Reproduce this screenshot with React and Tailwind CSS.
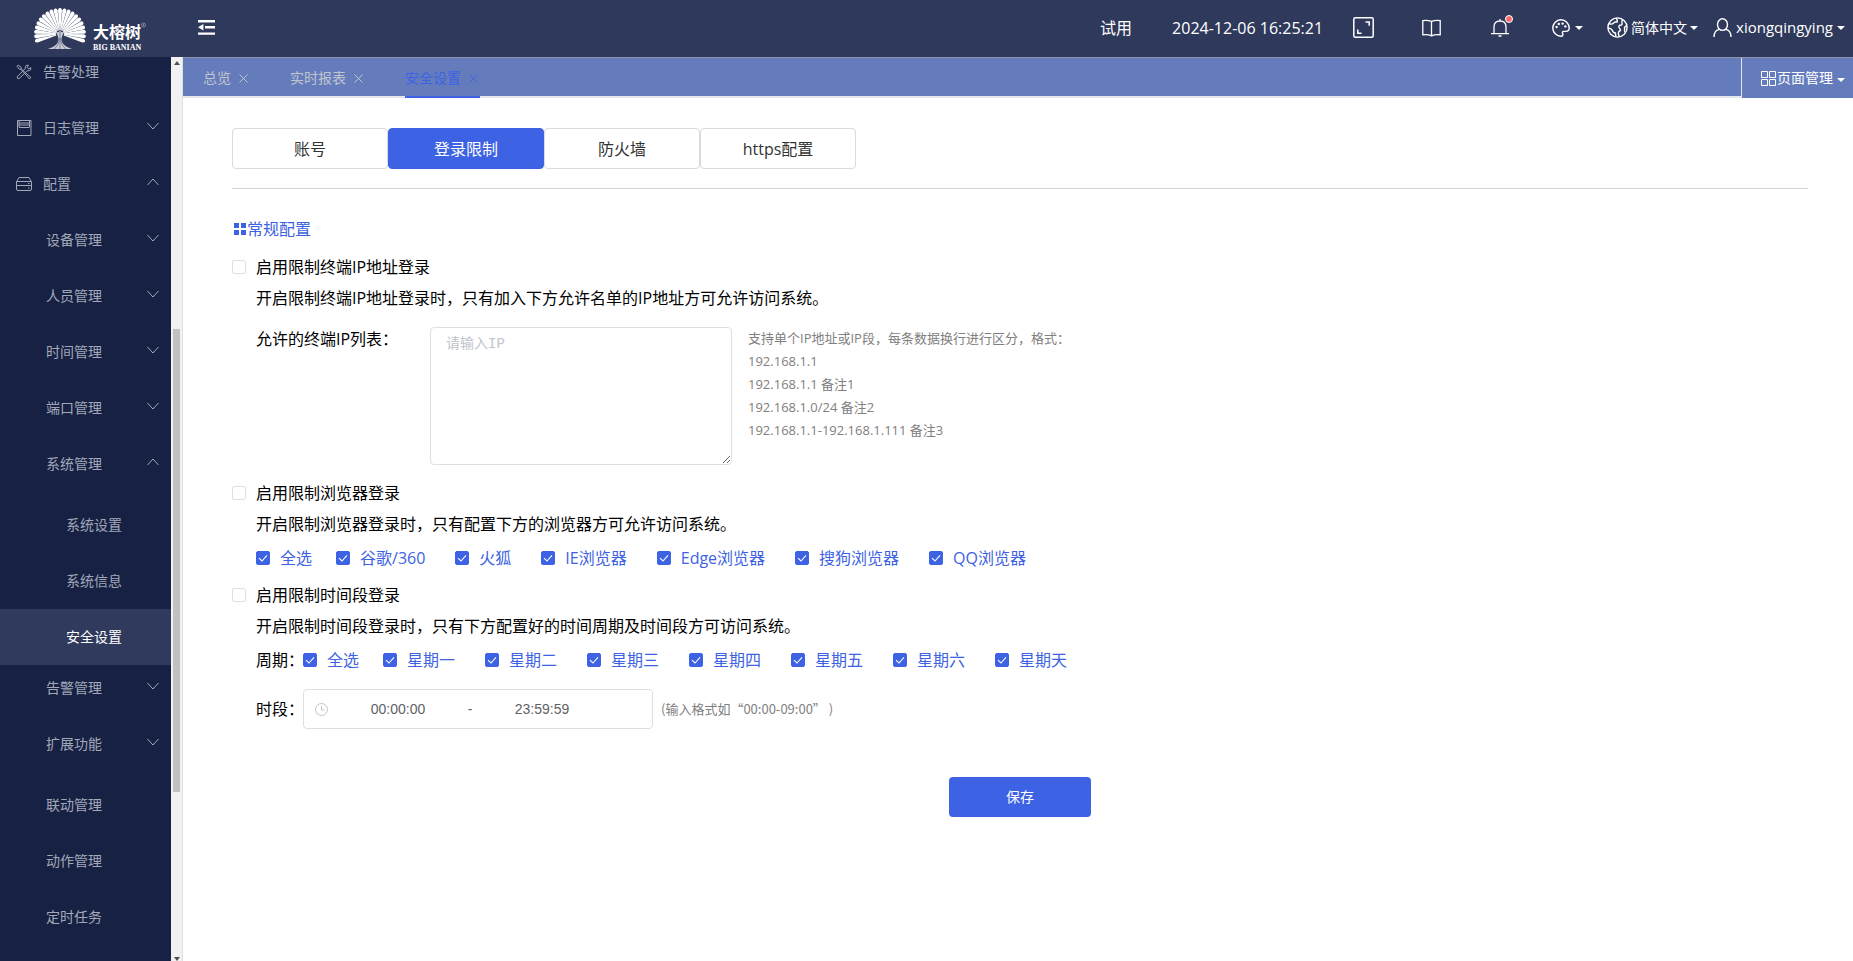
import { useState } from 'react';

const menu = [
  { id: 'alarm', label: '告警处理', level: 0, icon: 'tools', group: true },
  { id: 'log', label: '日志管理', level: 0, icon: 'log', group: true, arrow: 'down' },
  { id: 'config', label: '配置', level: 0, icon: 'config', group: true, arrow: 'up' },
  { id: 'device', label: '设备管理', level: 1, group: true, arrow: 'down' },
  { id: 'people', label: '人员管理', level: 1, group: true, arrow: 'down' },
  { id: 'time', label: '时间管理', level: 1, group: true, arrow: 'down' },
  { id: 'port', label: '端口管理', level: 1, group: true, arrow: 'down' },
  { id: 'system', label: '系统管理', level: 1, group: true, arrow: 'up' },
  { id: 'sys-set', label: '系统设置', level: 2 },
  { id: 'sys-info', label: '系统信息', level: 2 },
  { id: 'security', label: '安全设置', level: 2, active: true },
  { id: 'alarm-mgr', label: '告警管理', level: 1, group: true, arrow: 'down' },
  { id: 'extend', label: '扩展功能', level: 1, group: true, arrow: 'down' },
  { id: 'linkage', label: '联动管理', level: 1 },
  { id: 'action', label: '动作管理', level: 1 },
  { id: 'task', label: '定时任务', level: 1 },
];

const pageTabs = ['总览', '实时报表', '安全设置'];
const sections = ['账号', '登录限制', '防火墙', 'https配置'];
const browsers = ['谷歌/360', '火狐', 'IE浏览器', 'Edge浏览器', '搜狗浏览器', 'QQ浏览器'];
const weekdays = ['星期一', '星期二', '星期三', '星期四', '星期五', '星期六', '星期天'];

const ipHints = [
  '支持单个IP地址或IP段，每条数据换行进行区分，格式：',
  '192.168.1.1',
  '192.168.1.1 备注1',
  '192.168.1.0/24 备注2',
  '192.168.1.1-192.168.1.111 备注3',
];

const rays = Array.from({ length: 21 }, (_, i) => (i - 10) * 10.6);

function Logo() {
  return (
    <svg width="120" height="48" viewBox="0 0 120 48" className="ml-[30px] mt-1" role="img" aria-label="BIG BANIAN">
      <g fill="#fff">
        {rays.map((angle) => (
          <path
            key={angle}
            transform={`rotate(${angle} 30 30)`}
            d="M29.6 26 L28 6.2 Q28.2 4 30 4 Q31.8 4 32 6.2 L30.4 26 Z"
          />
        ))}
        <path
          d="M25 27 Q28.5 31 28.4 36 Q28 42 18 45 H42 Q32 42 31.6 36 Q31.5 31 35 27 Q31 30 30 26 Q29 30 25 27 Z"
          opacity="0.75"
        />
      </g>
      <g stroke="#2f395b" strokeWidth="0.5" fill="none">
        <path d="M30 28 V45 M29.3 34 Q29 42 24 45 M30.7 34 Q31 42 36 45" />
      </g>
      <text x="63" y="34" fill="#fff" fontSize="16" fontWeight="700" fontFamily="'Noto Sans CJK SC', sans-serif">
        大榕树
      </text>
      <text x="63" y="46" fill="#fff" fontSize="8" fontWeight="700" fontFamily="'Liberation Serif', serif">
        BIG BANIAN
      </text>
      <circle cx="113.5" cy="21" r="2" fill="none" stroke="#aeb4c8" strokeWidth="0.6" />
      <circle cx="113.5" cy="21" r="0.7" fill="#aeb4c8" />
    </svg>
  );
}

function MenuIcon({ name }) {
  const common = {
    width: 16,
    height: 16,
    viewBox: '0 0 16 16',
    fill: 'none',
    stroke: 'currentColor',
    strokeWidth: 1,
    'aria-hidden': true,
  };
  if (name === 'tools') {
    return (
      <svg {...common}>
        <path d="M1 2.2 2.2 1 5 3.2 5.3 5 14.6 13.2 Q15 14.6 13.4 14.8 L5 5.4 3.2 5 Z" />
        <path d="M14.8 3.6 12.6 5 11.2 3.6 12.4 1.2 Q9 .6 9.2 4.6 L1.2 12.8 Q.8 14.8 3 14.8 L11.2 6.8 Q15.4 7 14.8 3.6 Z" />
      </svg>
    );
  }
  if (name === 'log') {
    return (
      <svg {...common}>
        <path d="M1.5 .5 H15 V15.5 H1.5 Z M3 .5 V7 M13.5 .5 V7 M3 3 H13.5 M3 5 H13.5 M3 7.5 H13.5" />
      </svg>
    );
  }
  return (
    <svg {...common}>
      <path d="M.5 6 3 1.5 H13 L15.5 6 V13 Q15.5 14.5 14 14.5 H2 Q.5 14.5 .5 13 Z M.5 5.5 H15.5 M.5 9.5 H15.5 M12 7.5 H13.5 M12 12 H13.5" />
    </svg>
  );
}

function Chevron({ direction }) {
  return (
    <svg width="12" height="8" viewBox="0 0 12 8" fill="none" stroke="currentColor" strokeWidth="1" aria-hidden="true">
      <path d={direction === 'up' ? 'M.5 7 6 1 11.5 7' : 'M.5 1 6 7 11.5 1'} />
    </svg>
  );
}

function Caret() {
  return (
    <svg width="8" height="4" viewBox="0 0 8 4" fill="currentColor" aria-hidden="true">
      <path d="M0 0 H8 L4 4 Z" />
    </svg>
  );
}

function CheckBox({ id, checked, onChange }) {
  return (
    <span className="relative flex size-[14px] shrink-0">
      <input
        id={id}
        type="checkbox"
        checked={checked}
        onChange={onChange}
        className="size-[14px] appearance-none rounded-xs border border-[#dcdfe6] bg-white checked:border-[#3d62e3] checked:bg-[#3d62e3]"
      />
      {checked ? (
        <svg
          className="pointer-events-none absolute inset-0"
          width="14"
          height="14"
          viewBox="0 0 14 14"
          fill="none"
          stroke="#fff"
          strokeWidth="1.1"
        >
          <path d="M3 7.2 6 10 11 4.4" />
        </svg>
      ) : null}
    </span>
  );
}

function CheckGroup({ name, options }) {
  const [picked, setPicked] = useState(options);
  const all = picked.length === options.length;

  const toggle = (option) =>
    setPicked((list) => (list.includes(option) ? list.filter((item) => item !== option) : [...list, option]));

  return (
    <div className="flex items-center text-[#3d62e3]">
      <div className="mr-6 flex items-center gap-[10px]">
        <CheckBox id={`${name}-all`} checked={all} onChange={() => setPicked(all ? [] : options)} />
        <label htmlFor={`${name}-all`}>全选</label>
      </div>
      <div className="flex items-center gap-[30px]">
        {options.map((option) => (
          <div key={option} className="flex items-center gap-[10px]">
            <CheckBox id={`${name}-${option}`} checked={picked.includes(option)} onChange={() => toggle(option)} />
            <label htmlFor={`${name}-${option}`}>{option}</label>
          </div>
        ))}
      </div>
    </div>
  );
}

function LimitBlock({ id, title, description, children }) {
  const [enabled, setEnabled] = useState(false);
  return (
    <section>
      <div className="flex h-8 items-center gap-[10px]">
        <CheckBox id={id} checked={enabled} onChange={() => setEnabled(!enabled)} />
        <label htmlFor={id}>{title}</label>
      </div>
      <div className="pl-6">
        <p className="leading-[30px]">{description}</p>
        {children}
      </div>
    </section>
  );
}

function Header() {
  return (
    <header className="flex h-[57px] shrink-0 items-center bg-[#2f395b] pb-[2px] text-white">
      <div className="w-[198px] self-start">
        <Logo />
      </div>
      <button type="button" aria-label="收起菜单">
        <svg width="17" height="15" viewBox="0 0 17 15" fill="#fff" aria-hidden="true">
          <path d="M0 0 H17 V2.4 H0 Z M7 6 H17 V8.4 H7 Z M0 12.4 H17 V14.8 H0 Z M0 7.2 5.4 4 V10.4 Z" />
        </svg>
      </button>

      <div className="ml-auto flex items-center pr-2">
        <span className="mr-10">试用</span>
        <time className="mr-[30px]">2024-12-06 16:25:21</time>
        <button type="button" className="mr-12" aria-label="全屏">
          <svg width="21" height="21" viewBox="0 0 21 21" fill="none" stroke="#fff" strokeWidth="1.5" aria-hidden="true">
            <rect x=".8" y=".8" width="19.4" height="19.4" rx="1.5" />
            <path d="M12.5 5 H16.2 V8.8 M4.8 12.5 V16.2 H8.6" />
          </svg>
        </button>
        <button type="button" className="mr-[50px]" aria-label="帮助文档">
          <svg width="19" height="18" viewBox="0 0 19 18" fill="none" stroke="#fff" strokeWidth="1.3" aria-hidden="true">
            <path d="M.8 1.6 Q5.5 .8 9.5 2.4 Q13.5 .8 18.2 1.6 V15.8 Q13.5 15 9.5 16.8 Q5.5 15 .8 15.8 Z M9.5 2.4 V16.8" />
          </svg>
        </button>
        <button type="button" className="relative mr-[43px]" aria-label="消息">
          <svg width="18" height="18" viewBox="0 0 18 18" fill="none" stroke="#fff" strokeWidth="1.3" aria-hidden="true">
            <path d="M0 14.6 H18 M3 14.6 V8 Q3 2 9 2 Q15 2 15 8 V14.6 M9 0 V2 M7.5 17 H10.5" />
          </svg>
          <span className="absolute -top-1 -right-1 size-2 rounded-full border border-white bg-[#f56c6c]" />
        </button>
        <button type="button" className="mr-6 flex items-center gap-[5px]" aria-label="主题">
          <svg width="18" height="18" viewBox="0 0 18 18" fill="none" stroke="#fff" strokeWidth="1.4" aria-hidden="true">
            <path d="M9.5 17.2 A8.2 8.2 0 1 1 17.2 9 Q17.2 12.4 13.8 12.4 H11.6 Q10 12.6 10.6 14.2 Q11.4 16.8 9.5 17.2 Z" />
            <g fill="#fff" stroke="none">
              <circle cx="4.6" cy="8" r="1.2" />
              <circle cx="6.8" cy="5" r="1.2" />
              <circle cx="10.6" cy="4.6" r="1.2" />
              <circle cx="13.4" cy="7.4" r="1.2" />
            </g>
          </svg>
          <Caret />
        </button>
        <button type="button" className="mr-[15px] flex items-center gap-[3px] text-sm" aria-haspopup="menu">
          <svg width="21" height="21" viewBox="0 0 21 21" fill="none" stroke="#fff" strokeWidth="1.4" aria-hidden="true">
            <circle cx="10.5" cy="10.5" r="9.6" />
            <path d="M2 6.5 Q5 8 6.5 6 Q8 4.5 10 5.2 Q11 3 9 1 M1 11 Q4 11 5.4 13.4 Q6 16 8.4 16 Q9 18.6 8.6 20 M12.4 19.8 Q10.6 16 12 14.4 Q14.4 13.6 12.6 11.4 Q11 9.4 12.8 8.2 Q15.6 8.6 15 5.6 Q14.6 4 15.6 2.6 M19.8 8.6 Q17 9.6 17.6 12 Q17 14.6 18.4 15.6" />
          </svg>
          简体中文
          <Caret />
        </button>
        <button type="button" className="flex items-center gap-1 text-[15px]" aria-haspopup="menu">
          <svg width="19" height="20" viewBox="0 0 19 20" fill="none" stroke="#fff" strokeWidth="1.4" aria-hidden="true">
            <ellipse cx="9.5" cy="6.6" rx="5" ry="5.8" />
            <path d="M1 19 Q1.2 12 6.4 11.4 M12.6 11.4 Q17.8 12 18 19" />
          </svg>
          xiongqingying
          <Caret />
        </button>
      </div>
    </header>
  );
}

function Sidebar() {
  return (
    <aside className="flex w-[183px] shrink-0 border-r border-[#e0e0e0] bg-[#f1f1f1]">
      <nav className="flex-1 overflow-hidden bg-[#162144] text-sm text-[#a3a8b8]">
        <ul className="-mt-2">
          {menu.map((item) => (
            <li key={item.id}>
              <a
                href={`#${item.id}`}
                className={`flex h-14 items-center pr-3 ${item.group ? 'pb-[10px]' : ''} ${
                  item.active ? 'bg-[#303a5c] text-white' : ''
                } ${item.level === 0 ? 'pl-4' : item.level === 1 ? 'pl-[46px]' : 'pl-[66px]'}`}
              >
                {item.icon ? (
                  <span className="mr-[11px]">
                    <MenuIcon name={item.icon} />
                  </span>
                ) : null}
                {item.label}
                {item.arrow ? (
                  <span className="ml-auto pb-1">
                    <Chevron direction={item.arrow} />
                  </span>
                ) : null}
              </a>
            </li>
          ))}
        </ul>
      </nav>
      <div className="flex w-[11px] flex-col items-center justify-between pt-1 text-[#505050]" aria-hidden="true">
        <svg width="6" height="4" viewBox="0 0 6 4" fill="currentColor">
          <path d="M0 4 3 0 6 4 Z" />
        </svg>
        <div className="flex w-[7px] flex-1 flex-col">
          <div className="grow-[264]" />
          <div className="grow-[463] bg-[#c1c1c1]" />
          <div className="grow-[165]" />
        </div>
        <svg width="6" height="4" viewBox="0 0 6 4" fill="currentColor">
          <path d="M0 0 H6 L3 4 Z" />
        </svg>
      </div>
    </aside>
  );
}

function TabBar() {
  return (
    <div className="flex h-[41px] border-t border-[#8d93ab] bg-[#657cbc] text-sm">
      <div className="flex flex-1 gap-10 border-b-2 border-[#e4e7ed] pl-5">
        {pageTabs.map((tab) => {
          const active = tab === '安全设置';
          return (
            <div
              key={tab}
              className={`-mb-[2px] flex items-center gap-[5px] border-b-2 pt-[2px] ${
                active ? 'border-[#3d62e3] text-[#3d62e3]' : 'border-transparent text-[#c0c4cc]'
              }`}
            >
              <button type="button">{tab}</button>
              <button type="button" aria-label={`关闭${tab}`} className="flex size-[14px] items-center justify-center">
                <svg width="9" height="9" viewBox="0 0 9 9" stroke="currentColor" strokeWidth="1" aria-hidden="true">
                  <path d="M.5 .5 8.5 8.5 M8.5 .5 .5 8.5" />
                </svg>
              </button>
            </div>
          );
        })}
      </div>
      <button
        type="button"
        className="flex items-center border-l border-[#e4e7ed] pr-2 pl-[19px] text-white"
        aria-haspopup="menu"
      >
        <svg width="15" height="15" viewBox="0 0 15 15" fill="none" stroke="#fff" aria-hidden="true">
          <path d="M.5 .5 H6.5 V6.5 H.5 Z M8.5 .5 H14.5 V6.5 H8.5 Z M.5 8.5 H6.5 V14.5 H.5 Z M8.5 8.5 H14.5 V14.5 H8.5 Z" />
        </svg>
        <span className="ml-px">页面管理</span>
        <span className="ml-1 pt-1">
          <Caret />
        </span>
      </button>
    </div>
  );
}

export default function App() {
  const [section, setSection] = useState('登录限制');

  return (
    <div className="flex h-screen flex-col overflow-hidden bg-white font-['Open_Sans','Noto_Sans_CJK_SC',sans-serif] text-base text-black">
      <Header />
      <div className="flex min-h-0 flex-1">
        <Sidebar />
        <main className="min-w-0 flex-1">
          <TabBar />
          <div className="pt-[30px] pr-[45px] pl-[49px]">
            <div className="flex border-b border-[#d3d5d9] pb-[19px]">
              {sections.map((name) => (
                <button
                  key={name}
                  type="button"
                  onClick={() => setSection(name)}
                  className={`h-[41px] w-[156px] rounded border ${
                    name === section
                      ? 'border-[#3d62e3] bg-[#3d62e3] text-white'
                      : 'border-[#d8dadd] bg-white text-[#333]'
                  }`}
                >
                  {name}
                </button>
              ))}
            </div>

            <h2 className="mt-7 flex items-center gap-px pl-[2px] text-[#3d62e3]">
              <svg width="12" height="12" viewBox="0 0 12 12" fill="currentColor" aria-hidden="true">
                <path d="M0 0 H5 V5 H0 Z M7 0 H12 V5 H7 Z M0 7 H5 V12 H0 Z M7 7 H12 V12 H7 Z" />
              </svg>
              常规配置
            </h2>

            <div className="mt-[10px] flex flex-col gap-1">
              <LimitBlock
                id="limit-ip"
                title="启用限制终端IP地址登录"
                description="开启限制终端IP地址登录时，只有加入下方允许名单的IP地址方可允许访问系统。"
              >
                <div className="mt-[14px] mb-2 flex items-start">
                  <label htmlFor="ip-list" className="w-[174px]">
                    允许的终端IP列表：
                  </label>
                  <textarea
                    id="ip-list"
                    placeholder="请输入IP"
                    className="h-[138px] w-[302px] rounded border border-[#dcdfe6] px-[15px] py-[6px] font-['Liberation_Mono','Noto_Sans_CJK_SC',monospace] text-sm placeholder:text-[#c0c4cc]"
                  />
                  <div className="ml-4 text-[13px] leading-[23px] text-[#808080]">
                    {ipHints.map((hint) => (
                      <p key={hint}>{hint}</p>
                    ))}
                  </div>
                </div>
              </LimitBlock>

              <LimitBlock
                id="limit-browser"
                title="启用限制浏览器登录"
                description="开启限制浏览器登录时，只有配置下方的浏览器方可允许访问系统。"
              >
                <div className="mt-[2px] flex h-[34px] items-center">
                  <CheckGroup name="browser" options={browsers} />
                </div>
              </LimitBlock>

              <LimitBlock
                id="limit-time"
                title="启用限制时间段登录"
                description="开启限制时间段登录时，只有下方配置好的时间周期及时间段方可访问系统。"
              >
                <div className="mt-[2px] flex h-[34px] items-center">
                  <span className="w-[47px] whitespace-nowrap">周期：</span>
                  <CheckGroup name="week" options={weekdays} />
                </div>
                <div className="mt-3 flex items-center">
                  <label htmlFor="time-start" className="w-[47px] whitespace-nowrap">
                    时段：
                  </label>
                  <div className="flex h-10 w-[350px] items-center rounded border border-[#dcdfe6] pl-[11px] font-['Liberation_Sans',sans-serif] text-sm text-[#606266]">
                    <svg width="13" height="13" viewBox="0 0 13 13" fill="none" stroke="#c0c4cc" aria-hidden="true">
                      <circle cx="6.5" cy="6.5" r="6" />
                      <path d="M6.5 3 V7 H9.5" />
                    </svg>
                    <input id="time-start" defaultValue="00:00:00" className="ml-[2px] w-[136px] text-center" />
                    <span className="w-2 text-center">-</span>
                    <input aria-label="结束时间" defaultValue="23:59:59" className="w-[136px] text-center" />
                  </div>
                  <span className="ml-2 font-['Noto_Sans_CJK_SC',sans-serif] text-[13px] text-[#808080]">
                    (输入格式如“00:00-09:00” )
                  </span>
                </div>
              </LimitBlock>
            </div>

            <div className="mt-12 flex justify-center">
              <button type="button" className="h-10 w-[142px] rounded bg-[#3d62e3] text-sm text-white">
                保存
              </button>
            </div>
          </div>
        </main>
      </div>
    </div>
  );
}
